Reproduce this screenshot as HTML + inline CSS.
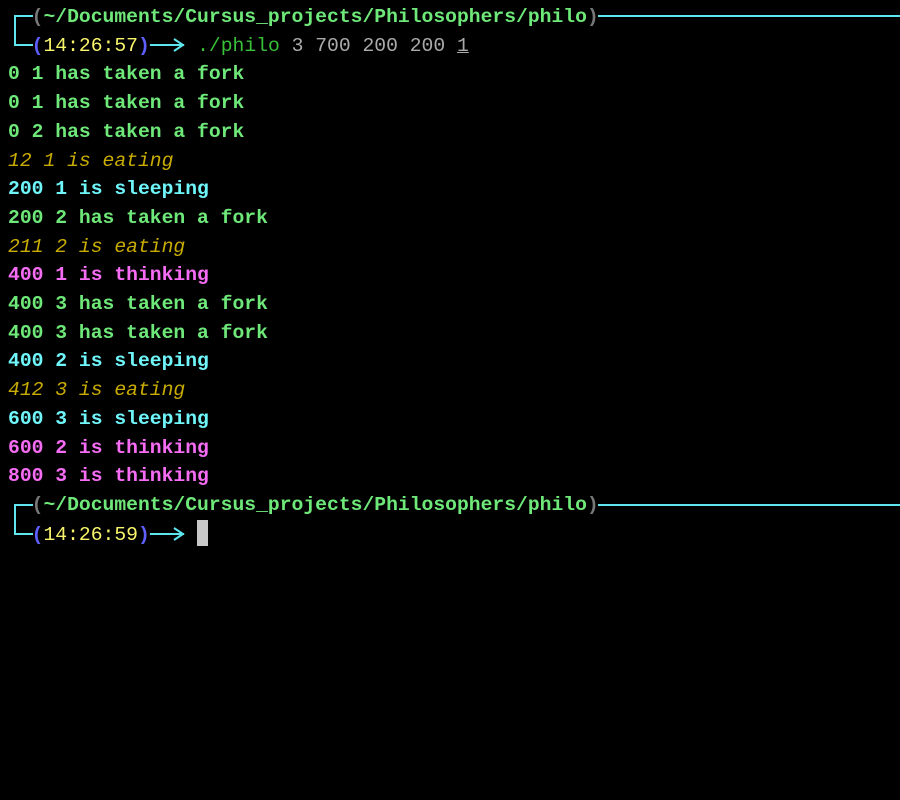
<!DOCTYPE html>
<html><head><meta charset="utf-8"><style>
html,body{margin:0;padding:0;background:#000;width:900px;height:800px;overflow:hidden}
#t{position:absolute;left:8px;top:3px;font-family:"Liberation Mono","DejaVu Sans Mono",monospace;font-size:19.7px;line-height:28.7px;font-weight:bold;white-space:pre;color:#6ee879}
.g{color:#6ee879}.y{color:#c9ac00;font-style:italic;font-weight:normal}.c{color:#6ff6fa}.m{color:#f66cf4}
.gr{color:#777}.b{color:#5f5fff}.ty{color:#f9f56a;font-weight:normal}.cg{color:#38c038;font-weight:normal}.a{color:#aaa;font-weight:normal}
.ln{position:absolute;background:#5ee6ee}
.cur{display:inline-block;width:11px;height:26px;background:#c8c8c8;vertical-align:-6px}
</style></head><body>
<div id="t"><span class="gr">  (</span>~/Documents/Cursus_projects/Philosophers/philo<span class="gr">)</span>
<span class="b">  (</span><span class="ty">14:26:57</span><span class="b">)</span>    <span class="cg">./philo</span><span class="a"> 3 700 200 200 <u>1</u></span>
0 1 has taken a fork
0 1 has taken a fork
0 2 has taken a fork
<span class="y">12 1 is eating</span>
<span class="c">200 1 is sleeping</span>
200 2 has taken a fork
<span class="y">211 2 is eating</span>
<span class="m">400 1 is thinking</span>
400 3 has taken a fork
400 3 has taken a fork
<span class="c">400 2 is sleeping</span>
<span class="y">412 3 is eating</span>
<span class="c">600 3 is sleeping</span>
<span class="m">600 2 is thinking</span>
<span class="m">800 3 is thinking</span>
<span class="gr">  (</span>~/Documents/Cursus_projects/Philosophers/philo<span class="gr">)</span>
<span class="b">  (</span><span class="ty">14:26:59</span><span class="b">)</span>    <span class="cur"></span></div>
<div class="ln" style="left:14px;top:15px;width:2px;height:31px"></div>
<div class="ln" style="left:14px;top:15px;width:19px;height:2px"></div>
<div class="ln" style="left:14px;top:44px;width:19px;height:2px"></div>
<div class="ln" style="left:598px;top:15px;width:302px;height:2px"></div>
<div class="ln" style="left:150px;top:44px;width:34px;height:2px"></div>
<svg style="position:absolute;left:172px;top:38px" width="14" height="14"><path d="M2 1 L11 7 L2 13" fill="none" stroke="#5ee6ee" stroke-width="2"/></svg>
<div class="ln" style="left:14px;top:504px;width:2px;height:31px"></div>
<div class="ln" style="left:14px;top:504px;width:19px;height:2px"></div>
<div class="ln" style="left:14px;top:533px;width:19px;height:2px"></div>
<div class="ln" style="left:598px;top:504px;width:302px;height:2px"></div>
<div class="ln" style="left:150px;top:533px;width:34px;height:2px"></div>
<svg style="position:absolute;left:172px;top:527px" width="14" height="14"><path d="M2 1 L11 7 L2 13" fill="none" stroke="#5ee6ee" stroke-width="2"/></svg>
</body></html>
